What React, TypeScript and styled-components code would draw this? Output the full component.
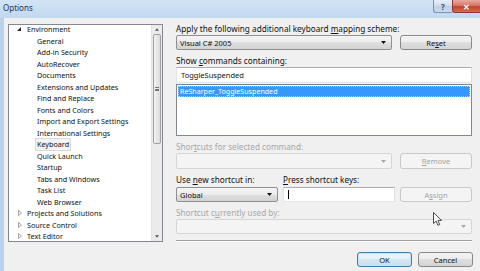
import * as React from 'react'
import styled, { createGlobalStyle, css } from 'styled-components'

const GlobalStyle = createGlobalStyle`
  html, body {
    margin: 0;
    padding: 0;
    background: #f0f0f0;
    overflow: hidden;
  }
  * {
    box-sizing: border-box;
  }
`

const font = `'Noto Sans', 'Open Sans', sans-serif`

const Window = styled.div`
  position: relative;
  width: 480px;
  height: 271px;
  display: flex;
  flex-direction: column;
  font-family: ${font};
  font-size: 7.5px;
  color: #111;
`

const TitleBar = styled.div`
  height: 18px;
  flex: none;
  display: flex;
  align-items: flex-start;
  justify-content: space-between;
  background: linear-gradient(#d3e4f6, #c2d8ef);
`

const Title = styled.div`
  padding: 2px 0 0 3px;
  font-size: 8px;
  color: #1c3450;
`

const CaptionButtons = styled.div`
  display: flex;
  height: 13px;
`

const CaptionButton = styled.div<{ $close?: boolean }>`
  display: flex;
  align-items: center;
  justify-content: center;
  height: 13px;
  border: 1px solid #7c93ad;
  border-top: none;
  border-right: none;
  border-radius: 0 0 0 3px;
  font-size: 8px;
  font-weight: bold;
  ${({ $close }) =>
    $close
      ? css`
          width: 28px;
          border-color: #8a3a32;
          color: #fff;
          background: linear-gradient(#e9a99f 0%, #d7786b 45%, #c3442f 55%, #d66a4f 100%);
        `
      : css`
          width: 19px;
          color: #3b4f66;
          background: linear-gradient(#e7eff8 0%, #d2dfee 45%, #bccfe6 55%, #c9dbef 100%);
        `}
`

const Body = styled.div`
  flex: 1;
  display: flex;
`

const Frame = styled.div`
  width: 4px;
  background: #bad3ec;
`

const Content = styled.div`
  flex: 1;
  display: flex;
  flex-direction: column;
  padding: 6px 7px 0 4px;
  background: #f0f0f0;
`

const Main = styled.div`
  display: flex;
  gap: 13px;
  height: 218px;
`

const Tree = styled.div`
  width: 155px;
  height: 218px;
  display: flex;
  background: #fff;
  border: 1px solid #828790;
`

const TreeList = styled.div`
  flex: 1;
  overflow: hidden;
  font-size: 7.2px;
`

const TreeInner = styled.div`
  margin-top: -1.5px;
`

const TreeRow = styled.div<{ $depth: number }>`
  display: flex;
  align-items: center;
  height: 11.5px;
  padding-left: ${({ $depth }) => ($depth ? 26 : 7)}px;
  white-space: nowrap;
`

const Expander = styled.svg`
  width: 9px;
  height: 6px;
  flex: none;
`

const TreeLabel = styled.span<{ $selected?: boolean }>`
  padding: 0 1px;
  line-height: 10.5px;
  border: 1px solid transparent;
  ${({ $selected }) =>
    $selected &&
    css`
      background: #f3f3f3;
      border-color: #dadada;
    `}
`

const ScrollBar = styled.div`
  width: 11px;
  display: flex;
  flex-direction: column;
  background: #ebebeb;
  border-left: 1px solid #e2e2e2;
`

const ScrollArrow = styled.div`
  height: 9px;
  display: flex;
  align-items: center;
  justify-content: center;
`

const Thumb = styled.div`
  margin: 0 1px;
  height: 110px;
  display: flex;
  align-items: center;
  justify-content: center;
  border: 1px solid #a0a0a0;
  border-radius: 2px;
  background: linear-gradient(90deg, #f3f3f3, #dcdcdc);
`

const Grip = styled.div`
  width: 4px;
  height: 4px;
  border-top: 1px solid #777;
  border-bottom: 1px solid #777;
  position: relative;
  &::after {
    content: '';
    position: absolute;
    left: 0;
    right: 0;
    top: 0.5px;
    border-top: 1px solid #777;
  }
`

const ScrollTrack = styled.div`
  flex: 1;
`

const Right = styled.div`
  width: 296px;
  display: flex;
  flex-direction: column;
`

const Label = styled.div<{ $disabled?: boolean; $gapBefore?: number }>`
  height: 10px;
  line-height: 10px;
  font-size: 8.2px;
  white-space: nowrap;
  margin-top: ${({ $gapBefore }) => $gapBefore ?? 0}px;
  margin-bottom: 1px;
  color: ${({ $disabled }) => ($disabled ? '#a7a7a7' : '#111')};
  & u {
    text-decoration-thickness: 1px;
    text-underline-offset: 1px;
  }
`

const Row = styled.div<{ $h: number }>`
  display: flex;
  gap: 8px;
  height: ${({ $h }) => $h}px;
`

/* the "new shortcut" block: three fixed columns, labels above the controls */
const ShortcutGrid = styled.div`
  display: grid;
  grid-template-columns: 102px 112px 72px;
  grid-auto-rows: auto;
  column-gap: 5px;
  margin-top: 6px;
  width: 296px;
`

const GridLabel = styled(Label)`
  margin: 0 0 2px;
  overflow: visible;
`

const GridCell = styled.div`
  height: 15px;
  display: flex;
  width: 100%;
  min-width: 0;
`

const Combo = styled.div<{ $disabled?: boolean }>`
  flex: 1 1 0;
  min-width: 0;
  height: 100%;
  display: flex;
  align-items: center;
  justify-content: space-between;
  padding: 0 5px 0 3px;
  border-radius: 2px;
  ${({ $disabled }) =>
    $disabled
      ? css`
          border: 1px solid #d5d5d5;
          background: #f4f4f4;
          color: #a0a0a0;
        `
      : css`
          border: 1px solid #8e8f8f;
          background: linear-gradient(#f4f4f4 0%, #ececec 50%, #dfdfdf 50%, #d3d3d3 100%);
          color: #111;
        `}
`

const Caret = styled.svg`
  width: 5px;
  height: 3px;
  flex: none;
`

const Button = styled.div<{ $disabled?: boolean; $isDefault?: boolean }>`
  flex: 0 0 72px;
  width: 72px;
  height: 100%;
  display: flex;
  align-items: center;
  justify-content: center;
  border-radius: 3px;
  ${({ $disabled, $isDefault }) =>
    $disabled
      ? css`
          border: 1px solid #c6c8ca;
          background: #f4f4f4;
          color: #a3a3a3;
        `
      : $isDefault
      ? css`
          border: 1px solid #3c7fb1;
          box-shadow: inset 0 0 0 1px #bfe4f6;
          background: linear-gradient(#eef6fb 0%, #e3eff7 50%, #d3e6f2 50%, #c9dfee 100%);
          color: #111;
        `
      : css`
          border: 1px solid #8a8a8a;
          background: linear-gradient(#f4f4f4 0%, #ececec 50%, #dfdfdf 50%, #d3d3d3 100%);
          color: #111;
        `}
`

const TextInput = styled.div`
  flex: 1 1 0;
  min-width: 0;
  height: 100%;
  display: flex;
  align-items: center;
  padding-left: 4px;
  background: #fff;
  border: 1px solid #abadb3;
  border-color: #abadb3 #dbdfe6 #e3e9ef #e2e3ea;
`

const TextCaret = styled.div`
  width: 1px;
  height: 9px;
  background: #000;
`

const ListBox = styled.div`
  margin-top: 1px;
  height: 52px;
  padding: 1px;
  font-size: 7.1px;
  background: #fff;
  border: 1px solid #828790;
`

const ListItem = styled.div<{ $selected?: boolean }>`
  height: 11px;
  line-height: 9px;
  padding-left: 1px;
  border: 1px dotted transparent;
  ${({ $selected }) =>
    $selected &&
    css`
      background: #3399ff;
      color: #fff;
      border-color: #a6cfff;
    `}
`

const Separator = styled.div`
  margin-top: 6px;
  height: 2px;
  border-top: 1px solid #a0a0a0;
  border-bottom: 1px solid #fff;
`

const Footer = styled.div`
  display: flex;
  justify-content: flex-end;
  gap: 6px;
  margin-top: 10px;
  height: 15px;
`

const FooterButton = styled(Button)`
  flex: 0 0 55px;
  width: 55px;
`

const Pointer = styled.svg`
  position: absolute;
  left: 433px;
  top: 212px;
  width: 9px;
  height: 14px;
`

const treeItems: { name: string; depth: number; expander?: 'open' | 'closed' }[] = [
  { name: 'Environment', depth: 0, expander: 'open' },
  { name: 'General', depth: 1 },
  { name: 'Add-in Security', depth: 1 },
  { name: 'AutoRecover', depth: 1 },
  { name: 'Documents', depth: 1 },
  { name: 'Extensions and Updates', depth: 1 },
  { name: 'Find and Replace', depth: 1 },
  { name: 'Fonts and Colors', depth: 1 },
  { name: 'Import and Export Settings', depth: 1 },
  { name: 'International Settings', depth: 1 },
  { name: 'Keyboard', depth: 1 },
  { name: 'Quick Launch', depth: 1 },
  { name: 'Startup', depth: 1 },
  { name: 'Tabs and Windows', depth: 1 },
  { name: 'Task List', depth: 1 },
  { name: 'Web Browser', depth: 1 },
  { name: 'Projects and Solutions', depth: 0, expander: 'closed' },
  { name: 'Source Control', depth: 0, expander: 'closed' },
  { name: 'Text Editor', depth: 0, expander: 'closed' },
]

const DropArrow = ({ disabled }: { disabled?: boolean }) => (
  <Caret viewBox="0 0 5 3">
    <path d="M0 0h5L2.5 3z" fill={disabled ? '#a8a8a8' : '#111'} />
  </Caret>
)

const TreeExpander = ({ kind }: { kind?: 'open' | 'closed' }) => (
  <Expander viewBox="0 0 9 6">
    {kind === 'open' && <path d="M5 1v4H1z" fill="#262626" />}
    {kind === 'closed' && (
      <path d="M2.5 0.5l3 2.5-3 2.5z" fill="none" stroke="#8c8c8c" strokeWidth="0.8" />
    )}
  </Expander>
)

export default function App() {
  return (
    <>
      <GlobalStyle />
      <Window>
        <TitleBar>
          <Title>Options</Title>
          <CaptionButtons>
            <CaptionButton>?</CaptionButton>
            <CaptionButton $close>✕</CaptionButton>
          </CaptionButtons>
        </TitleBar>
        <Body>
          <Frame />
          <Content>
            <Main>
              <Tree>
                <TreeList>
                  <TreeInner>
                    {treeItems.map((item) => (
                      <TreeRow key={item.name} $depth={item.depth}>
                        {item.depth === 0 && <TreeExpander kind={item.expander} />}
                        <TreeLabel $selected={item.name === 'Keyboard'}>{item.name}</TreeLabel>
                      </TreeRow>
                    ))}
                  </TreeInner>
                </TreeList>
                <ScrollBar>
                  <ScrollArrow>
                    <Caret viewBox="0 0 5 3" style={{ width: 4, height: 3 }}>
                      <path d="M0 3h5L2.5 0z" fill="#555" />
                    </Caret>
                  </ScrollArrow>
                  <Thumb>
                    <Grip />
                  </Thumb>
                  <ScrollTrack />
                  <ScrollArrow>
                    <Caret viewBox="0 0 5 3" style={{ width: 4, height: 3 }}>
                      <path d="M0 0h5L2.5 3z" fill="#555" />
                    </Caret>
                  </ScrollArrow>
                </ScrollBar>
              </Tree>

              <Right>
                <Label>
                  Apply the following additional keyboard <u>m</u>apping scheme:
                </Label>
                <Row $h={15}>
                  <Combo>
                    <span>Visual C# 2005</span>
                    <DropArrow />
                  </Combo>
                  <Button>
                    <span>
                      Re<u>s</u>et
                    </span>
                  </Button>
                </Row>

                <Label $gapBefore={6}>
                  Show <u>c</u>ommands containing:
                </Label>
                <Row $h={16}>
                  <TextInput>ToggleSuspended</TextInput>
                </Row>
                <ListBox>
                  <ListItem $selected>ReSharper_ToggleSuspended</ListItem>
                </ListBox>

                <Label $gapBefore={6} $disabled>
                  Shor<u>t</u>cuts for selected command:
                </Label>
                <Row $h={16}>
                  <Combo $disabled>
                    <span />
                    <DropArrow disabled />
                  </Combo>
                  <Button $disabled>
                    <span>
                      <u>R</u>emove
                    </span>
                  </Button>
                </Row>

                <ShortcutGrid>
                  <GridLabel>
                    Use <u>n</u>ew shortcut in:
                  </GridLabel>
                  <GridLabel>
                    <u>P</u>ress shortcut keys:
                  </GridLabel>
                  <div />
                  <GridCell>
                    <Combo>
                      <span>Global</span>
                      <DropArrow />
                    </Combo>
                  </GridCell>
                  <GridCell>
                    <TextInput>
                      <TextCaret />
                    </TextInput>
                  </GridCell>
                  <GridCell>
                    <Button $disabled>
                      <span>
                        A<u>s</u>sign
                      </span>
                    </Button>
                  </GridCell>
                </ShortcutGrid>

                <Label $gapBefore={6} $disabled>
                  Shortcut c<u>u</u>rrently used by:
                </Label>
                <Row $h={15}>
                  <Combo $disabled>
                    <span />
                    <DropArrow disabled />
                  </Combo>
                </Row>
                <Separator />
              </Right>
            </Main>

            <Footer>
              <FooterButton $isDefault>OK</FooterButton>
              <FooterButton>Cancel</FooterButton>
            </Footer>
          </Content>
        </Body>

        <Pointer viewBox="0 0 9 14">
          <path
            d="M0.5 0.5v11l2.6-2.4 1.8 4.2 1.8-0.8-1.8-4.1h3.6z"
            fill="#fff"
            stroke="#222"
            strokeWidth="0.8"
            strokeLinejoin="round"
          />
        </Pointer>
      </Window>
    </>
  )
}
